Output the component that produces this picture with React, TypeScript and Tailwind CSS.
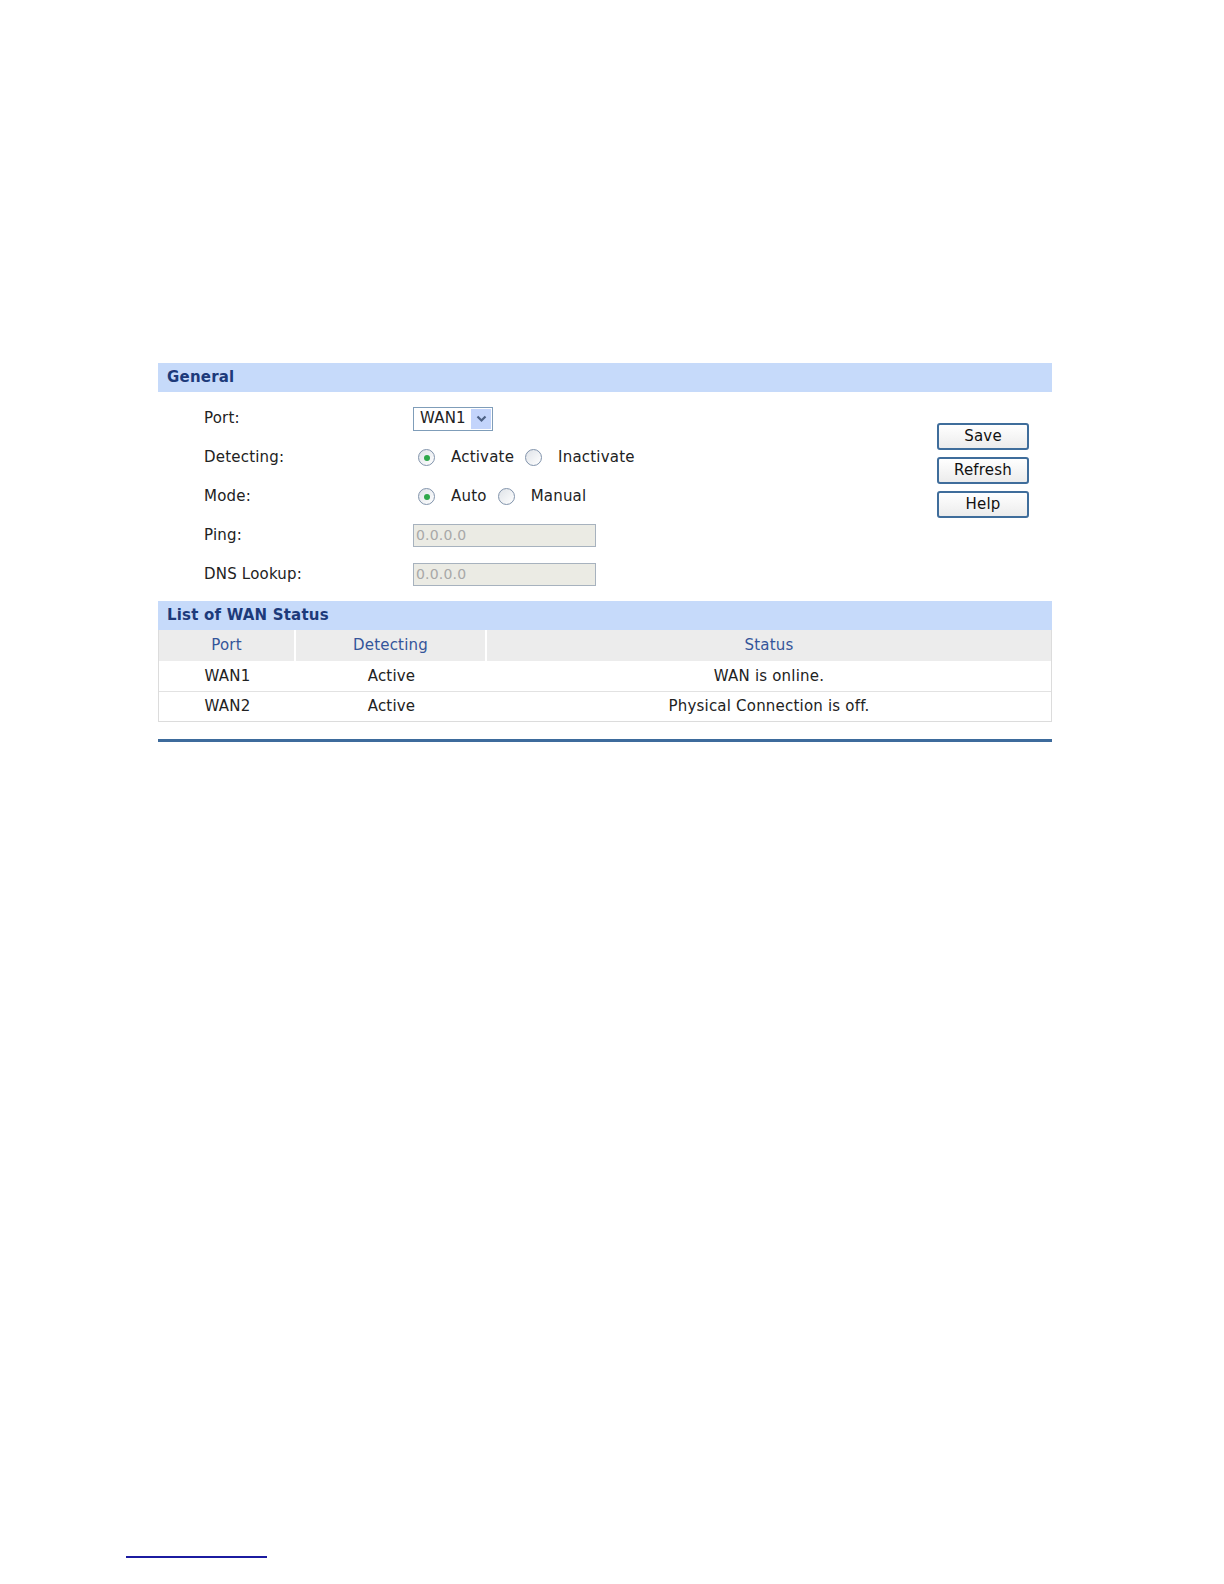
import React from 'react';

const font = { fontFamily: '"DejaVu Sans", Verdana, sans-serif' };

const Radio: React.FC<{ checked?: boolean }> = ({ checked }) => (
  <span className="flex h-[17px] w-[17px] items-center justify-center rounded-full border border-[#8193ab] bg-gradient-to-br from-[#dfe3e8] to-white">
    {checked && <span className="h-[6px] w-[6px] rounded-full bg-[#2ea84a]" />}
  </span>
);

const FormRow: React.FC<{ label: string; children: React.ReactNode }> = ({ label, children }) => (
  <div className="flex h-[39px] items-center">
    <div className="w-[255px] pl-[46px]">{label}</div>
    <div className="flex items-center">{children}</div>
  </div>
);

const SideButton: React.FC<{ label: string }> = ({ label }) => (
  <button className="h-[27px] w-[92px] rounded-[3px] border-2 border-[#3f6d9b] bg-gradient-to-b from-white to-[#ececec] text-[15px] text-[#111]">
    {label}
  </button>
);

const rows = [
  { port: 'WAN1', detecting: 'Active', status: 'WAN is online.' },
  { port: 'WAN2', detecting: 'Active', status: 'Physical Connection is off.' },
];

const App: React.FC = () => {
  return (
    <div className="h-[1584px] w-full overflow-hidden bg-white text-[15px] tracking-[0.2px] text-[#222]" style={font}>
      <div className="pl-[158px] pt-[363px]">
        <div className="w-[894px]">
          <div className="flex h-[29px] items-center bg-[#c6dafa] pl-[9px] font-bold text-[#1d3a7a]">General</div>

          <div className="flex">
            <div className="flex-1 pb-[7px] pt-[7px]">
              <FormRow label="Port:">
                <div className="flex h-[24px] w-[80px] items-center border border-[#7f9db9] bg-white pl-[6px]">
                  <span className="flex-1">WAN1</span>
                  <span className="mr-[1px] flex h-[20px] w-[20px] items-center justify-center bg-[#c3d4fb]">
                    <svg width="11" height="8" viewBox="0 0 11 8">
                      <path d="M1.5 1.5 L5.5 5.5 L9.5 1.5" fill="none" stroke="#4d6185" strokeWidth="2.2" />
                    </svg>
                  </span>
                </div>
              </FormRow>
              <FormRow label="Detecting:">
                <span className="ml-[5px]"><Radio checked /></span>
                <span className="ml-[16px]">Activate</span>
                <span className="ml-[11px]"><Radio /></span>
                <span className="ml-[16px]">Inactivate</span>
              </FormRow>
              <FormRow label="Mode:">
                <span className="ml-[5px]"><Radio checked /></span>
                <span className="ml-[16px]">Auto</span>
                <span className="ml-[11px]"><Radio /></span>
                <span className="ml-[16px]">Manual</span>
              </FormRow>
              <FormRow label="Ping:">
                <div className="flex h-[23px] w-[183px] items-center border border-[#a7b2be] bg-[#ebebe4] pl-[2px] text-[14px] text-[#a8a8a8]">0.0.0.0</div>
              </FormRow>
              <FormRow label="DNS Lookup:">
                <div className="flex h-[23px] w-[183px] items-center border border-[#a7b2be] bg-[#ebebe4] pl-[2px] text-[14px] text-[#a8a8a8]">0.0.0.0</div>
              </FormRow>
            </div>
            <div className="mr-[23px] flex flex-col gap-[7px] pt-[31px]">
              <SideButton label="Save" />
              <SideButton label="Refresh" />
              <SideButton label="Help" />
            </div>
          </div>

          <div className="flex h-[29px] items-center bg-[#c6dafa] pl-[9px] font-bold text-[#1d3a7a]">List of WAN Status</div>

          <div className="border-x border-b border-[#dcdcdc]">
            <div className="flex h-[31px] bg-[#ececec] text-[#34559a]">
              <div className="flex w-[137px] items-center justify-center border-r-2 border-white">Port</div>
              <div className="flex w-[191px] items-center justify-center border-r-2 border-white">Detecting</div>
              <div className="flex flex-1 items-center justify-center">Status</div>
            </div>
            {rows.map((r, i) => (
              <div key={i} className={`flex h-[30px] ${i > 0 ? 'border-t border-[#e2e2e2]' : ''}`}>
                <div className="flex w-[137px] items-center justify-center">{r.port}</div>
                <div className="flex w-[191px] items-center justify-center">{r.detecting}</div>
                <div className="flex flex-1 items-center justify-center">{r.status}</div>
              </div>
            ))}
          </div>

          <div className="mt-[17px] h-[3px] bg-[#3d6b9c]" />
        </div>
      </div>

      <div className="ml-[126px] mt-[814px] h-[2px] w-[141px] bg-[#1b1ba0]" />
    </div>
  );
};

export default App;
